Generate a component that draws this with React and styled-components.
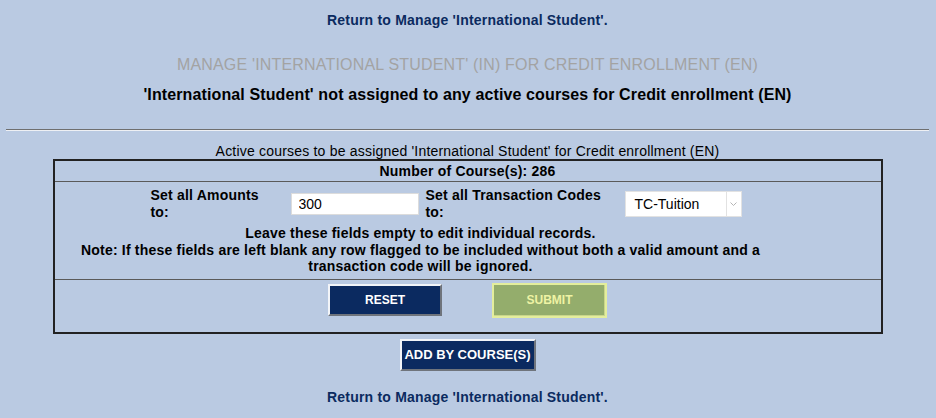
import styled, { createGlobalStyle } from "styled-components";

const GlobalStyle = createGlobalStyle`
  html, body {
    margin: 0;
    padding: 0;
    background: #bacae2;
  }
  body {
    font-family: "Liberation Sans", Arial, sans-serif;
    color: #000;
  }
`;

const Page = styled.div`
  padding: 0 7px 0 6px;
  display: flex;
  flex-direction: column;
  align-items: center;
`;

const BackLink = styled.a`
  display: block;
  color: #0b2a60;
  font-size: 14px;
  letter-spacing: 0.2px;
  font-weight: bold;
  text-decoration: none;
  line-height: 16px;
  margin-top: ${(p) => p.$top}px;
`;

const Title = styled.div`
  margin-top: 28px;
  color: #a3a3a3;
  font-size: 16px;
  letter-spacing: 0.18px;
  line-height: 18px;
`;

const Subtitle = styled.div`
  margin-top: 12px;
  font-size: 16px;
  letter-spacing: 0.12px;
  font-weight: bold;
  line-height: 18px;
`;

const Rule = styled.hr`
  align-self: stretch;
  margin: 25px 0 0;
  border: 0;
  border-top: 1px solid #6f6f6f;
  border-bottom: 1px solid #eef0f4;
  height: 0;
`;

const Caption = styled.div`
  margin-top: 13px;
  font-size: 14px;
  letter-spacing: 0.2px;
  line-height: 14px;
`;

const Panel = styled.table`
  width: 830px;
  border-collapse: collapse;
  border: 2px solid #222;
  margin-top: 1px;
  font-size: 14px;
  letter-spacing: 0.2px;
  font-weight: bold;

  td {
    border-top: 1px solid #5a5a5a;
    padding: 0;
    text-align: center;
  }
  tr:first-child td {
    border-top: 0;
  }
`;

const CountCell = styled.td`
  height: 20px;
`;

const FieldsRow = styled.div`
  display: grid;
  grid-template-columns: 140px 135px 199px 117px;
  align-items: center;
  padding: 5px 0 0 96px;
  text-align: left;
  line-height: 17px;
`;

const Label = styled.div`
  max-width: ${(p) => p.$w}px;
`;

const TextInput = styled.input`
  box-sizing: border-box;
  width: 128px;
  height: 22px;
  border: 1px solid #dcdcdc;
  background: #fff;
  font-family: "Liberation Sans", Arial, sans-serif;
  font-size: 14px;
  padding: 0 7px;
  outline: none;
`;

const SelectBox = styled.div`
  box-sizing: border-box;
  width: 117px;
  height: 26px;
  background: #fff;
  border: 1px solid #e2e2e2;
  display: flex;
  align-items: center;
  font-weight: normal;
  font-size: 14px;
  letter-spacing: 0;
`;

const SelectText = styled.span`
  flex: 1;
  padding-left: 9px;
`;

const SelectArrow = styled.span`
  width: 14px;
  height: 24px;
  border-left: 1px solid #e2e2e2;
  display: flex;
  align-items: center;
  justify-content: center;
`;

const Notes = styled.div`
  padding: 4px 94px 4px 0;
  line-height: 16.5px;
`;

const ButtonRow = styled.div`
  display: flex;
  justify-content: center;
  align-items: flex-start;
  gap: 50px;
  height: 49px;
  padding-top: 3px;
`;

const NavyButton = styled.button`
  box-sizing: border-box;
  width: ${(p) => p.$w}px;
  height: 32px;
  margin-top: ${(p) => p.$mt || 0}px;
  background: #0b2a60;
  color: #fff;
  font-family: "Liberation Sans", Arial, sans-serif;
  font-weight: bold;
  font-size: ${(p) => p.$fs || 12}px;
  border: 2px solid;
  border-color: #f2f4f8 #6f747c #6f747c #f2f4f8;
  padding: 0;
`;

const SubmitButton = styled.button`
  box-sizing: border-box;
  width: 115px;
  height: 35px;
  background: #94ad6c;
  color: #eef3a4;
  font-family: "Liberation Sans", Arial, sans-serif;
  font-weight: bold;
  font-size: 12px;
  border: 2px solid #e4ee9c;
  box-shadow: inset -1px -1px 0 #c9d68a;
  padding: 0;
`;

const AddWrap = styled.div`
  margin-top: 5px;
  display: flex;
`;

export default function App() {
  return (
    <Page>
      <GlobalStyle />
      <BackLink href="#" $top={12}>
        Return to Manage 'International Student'.
      </BackLink>
      <Title>MANAGE 'INTERNATIONAL STUDENT' (IN) FOR CREDIT ENROLLMENT (EN)</Title>
      <Subtitle>
        'International Student' not assigned to any active courses for Credit enrollment (EN)
      </Subtitle>
      <Rule />
      <Caption>
        Active courses to be assigned 'International Student' for Credit enrollment (EN)
      </Caption>
      <Panel>
        <tbody>
          <tr>
            <CountCell>Number of Course(s): 286</CountCell>
          </tr>
          <tr>
            <td>
              <FieldsRow>
                <Label $w={122}>Set all Amounts to:</Label>
                <TextInput defaultValue="300" />
                <Label $w={185}>Set all Transaction Codes to:</Label>
                <SelectBox>
                  <SelectText>TC-Tuition</SelectText>
                  <SelectArrow>
                    <svg width="7" height="4" viewBox="0 0 7 4">
                      <path d="M0.5 0.5 L3.5 3.5 L6.5 0.5" fill="none" stroke="#b5b5b5" strokeWidth="1" />
                    </svg>
                  </SelectArrow>
                </SelectBox>
              </FieldsRow>
              <Notes>
                Leave these fields empty to edit individual records.
                <br />
                Note: If these fields are left blank any row flagged to be included without both a valid amount and a
                <br />
                transaction code will be ignored.
              </Notes>
            </td>
          </tr>
          <tr>
            <td>
              <ButtonRow>
                <NavyButton $w={114} $mt={1}>RESET</NavyButton>
                <SubmitButton>SUBMIT</SubmitButton>
              </ButtonRow>
            </td>
          </tr>
        </tbody>
      </Panel>
      <AddWrap>
        <NavyButton $w={136} $fs={13}>ADD BY COURSE(S)</NavyButton>
      </AddWrap>
      <BackLink href="#" $top={18}>
        Return to Manage 'International Student'.
      </BackLink>
    </Page>
  );
}
